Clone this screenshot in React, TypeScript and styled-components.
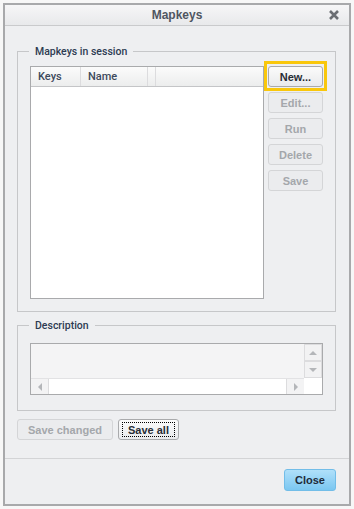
import React from 'react';
import styled, { createGlobalStyle } from 'styled-components';

const GlobalStyle = createGlobalStyle`
  html, body { margin: 0; padding: 0; background: #f7f7f7; }
  body { padding: 3px; width: 354px; height: 509px; box-sizing: border-box; }
  * { box-sizing: border-box; }
`;

const Window = styled.div`
  width: 348px;
  height: 503px;
  border: 2px solid #a8a9ab;
  background: #eeeff1;
  display: flex;
  flex-direction: column;
  font-family: "Liberation Sans", Arial, sans-serif;
  font-size: 11px;
  color: #33404f;
`;

const TitleBar = styled.div`
  height: 21px;
  flex: none;
  display: flex;
  align-items: center;
  justify-content: center;
  position: relative;
  background: linear-gradient(#f6f6f7, #e8e9eb);
  border-bottom: 1px solid #c9cacc;
  font-weight: bold;
  font-size: 12px;
  color: #4f5661;
`;

const CloseX = styled.span`
  position: absolute;
  right: 9px;
  top: 4px;
  width: 12px;
  height: 12px;
  display: flex;
`;

const Body = styled.div`
  flex: 1;
  padding: 19px 13px 0 12px;
  display: flex;
  flex-direction: column;
`;

const Group = styled.fieldset<{ $h: number; $gap?: number }>`
  margin: ${p => p.$gap ?? 0}px 0 0;
  padding: 0 12px;
  border: 1px solid #c6c7c9;
  height: ${p => p.$h}px;
  min-width: 0;
`;

const Legend = styled.legend`
  margin-left: -1px;
  padding: 0 6px;
  font-family: Roboto, "Liberation Sans", sans-serif;
  font-weight: 500;
  font-size: 10.5px;
  color: #2d3b52;
`;

const SessionRow = styled.div`
  display: flex;
  gap: 4px;
  margin-top: 8px;
`;

const Table = styled.div`
  flex: none;
  width: 234px;
  height: 233px;
  border: 1px solid #a9aaac;
  background: #fff;
`;

const HeaderRow = styled.div`
  display: flex;
  height: 20px;
  background: linear-gradient(#fbfbfb, #eceded);
  border-bottom: 1px solid #c4c5c7;
`;

const HeaderCell = styled.div<{ $w?: number }>`
  ${p => (p.$w ? `width: ${p.$w}px;` : 'flex: 1;')}
  border-right: 1px solid #dcdcde;
  padding-left: 7px;
  display: flex;
  align-items: center;
  font-family: Roboto, "Liberation Sans", sans-serif;
  font-weight: 500;
  font-size: 11px;
  color: #3d4a5c;
  &:last-child { border-right: none; }
`;

const ButtonCol = styled.div`
  flex: none;
  display: flex;
  flex-direction: column;
  gap: 5px;
`;

const Btn = styled.button<{ $w: number; $off?: boolean; $dotted?: boolean; $focus?: boolean }>`
  width: ${p => p.$w}px;
  height: 21px;
  padding: 0;
  border: 1px solid ${p => (p.$off ? '#d4d5d7' : '#a9aaac')};
  border-radius: 3px;
  background: ${p => (p.$off ? '#ebecee' : 'linear-gradient(#fbfbfb, #e9eaec)')};
  font-family: "Liberation Sans", Arial, sans-serif;
  font-size: 11px;
  font-weight: bold;
  color: ${p => (p.$off ? '#a4a7ab' : '#272c35')};
  display: flex;
  align-items: center;
  justify-content: center;
  position: relative;
  ${p => (p.$dotted ? `&::after { content: ''; position: absolute; inset: 2px 3px; border: 1px dotted #000; }` : '')}
  ${p => (p.$focus ? `&::before { content: ''; position: absolute; left: -5px; right: -5px; top: -6px; bottom: -5px; border: 3px solid #f9c70c; }` : '')}
`;

const CloseBtn = styled(Btn)`
  border-color: #72bde8;
  background: linear-gradient(#b0e0fa, #7bc7f1);
  color: #1e2b3a;
  height: 22px;
`;

const DescBox = styled.div`
  margin-top: 11px;
  width: 293px;
  height: 52px;
  border: 1px solid #a9aaac;
  background: #f4f4f5;
  display: grid;
  grid-template-columns: 1fr 18px;
  grid-template-rows: 17px 17px 16px;
`;

const TextArea = styled.div`
  grid-column: 1;
  grid-row: 1 / 3;
`;

const VBtn = styled.div<{ $row: number }>`
  grid-column: 2;
  grid-row: ${p => p.$row};
  border: 1px solid #dcdcde;
  background: #f2f2f3;
  display: flex;
  align-items: center;
  justify-content: center;
`;

const HScroll = styled.div`
  grid-column: 1;
  grid-row: 3;
  display: flex;
  background: #fff;
  border-top: 1px solid #e2e2e4;
`;

const HTrack = styled.div`
  flex: 1;
`;

const HArrow = styled.div`
  width: 18px;
  display: flex;
  align-items: center;
  justify-content: center;
  background: #f3f3f4;
  border-right: 1px solid #dcdcde;
  &:last-child { border-right: none; border-left: 1px solid #dcdcde; }
`;

const Corner = styled.div`
  grid-column: 2;
  grid-row: 3;
  background: #fff;
`;

const SaveRow = styled.div`
  display: flex;
  gap: 5px;
  margin-top: 8px;
`;

const Footer = styled.div`
  flex: none;
  height: 46px;
  border-top: 1px solid #d3d4d6;
  display: flex;
  justify-content: flex-end;
  align-items: flex-start;
  padding: 10px 13px 0 0;
`;

const Tri = ({ dir }: { dir: 'up' | 'down' | 'left' | 'right' }) => {
  const pts = {
    up: '0,4 4,0 8,4',
    down: '0,0 8,0 4,4',
    left: '4,0 4,8 0,4',
    right: '0,0 0,8 4,4',
  }[dir];
  const vertical = dir === 'up' || dir === 'down';
  return (
    <svg width={vertical ? 8 : 4} height={vertical ? 4 : 8}>
      <polygon points={pts} fill="#b4b6b9" />
    </svg>
  );
};

export default function App() {
  return (
    <>
      <GlobalStyle />
      <Window>
        <TitleBar>
          Mapkeys
          <CloseX>
            <svg width="12" height="12" viewBox="0 0 12 12">
              <path d="M2 2 L10 10 M10 2 L2 10" stroke="#6b6e73" strokeWidth="2.6" />
            </svg>
          </CloseX>
        </TitleBar>
        <Body>
          <Group $h={267}>
            <Legend>Mapkeys in session</Legend>
            <SessionRow>
              <Table>
                <HeaderRow>
                  <HeaderCell $w={50}>Keys</HeaderCell>
                  <HeaderCell $w={67}>Name</HeaderCell>
                  <HeaderCell $w={4} />
                  <HeaderCell />
                </HeaderRow>
              </Table>
              <ButtonCol>
                <Btn $w={55} $focus>New...</Btn>
                <Btn $w={55} $off>Edit...</Btn>
                <Btn $w={55} $off>Run</Btn>
                <Btn $w={55} $off>Delete</Btn>
                <Btn $w={55} $off>Save</Btn>
              </ButtonCol>
            </SessionRow>
          </Group>
          <Group $h={92} $gap={7}>
            <Legend>Description</Legend>
            <DescBox>
              <TextArea />
              <VBtn $row={1}><Tri dir="up" /></VBtn>
              <VBtn $row={2}><Tri dir="down" /></VBtn>
              <HScroll>
                <HArrow><Tri dir="left" /></HArrow>
                <HTrack />
                <HArrow><Tri dir="right" /></HArrow>
              </HScroll>
              <Corner />
            </DescBox>
          </Group>
          <SaveRow>
            <Btn $w={96} $off>Save changed</Btn>
            <Btn $w={61} $dotted>Save all</Btn>
          </SaveRow>
        </Body>
        <Footer>
          <CloseBtn $w={52}>Close</CloseBtn>
        </Footer>
      </Window>
    </>
  );
}
